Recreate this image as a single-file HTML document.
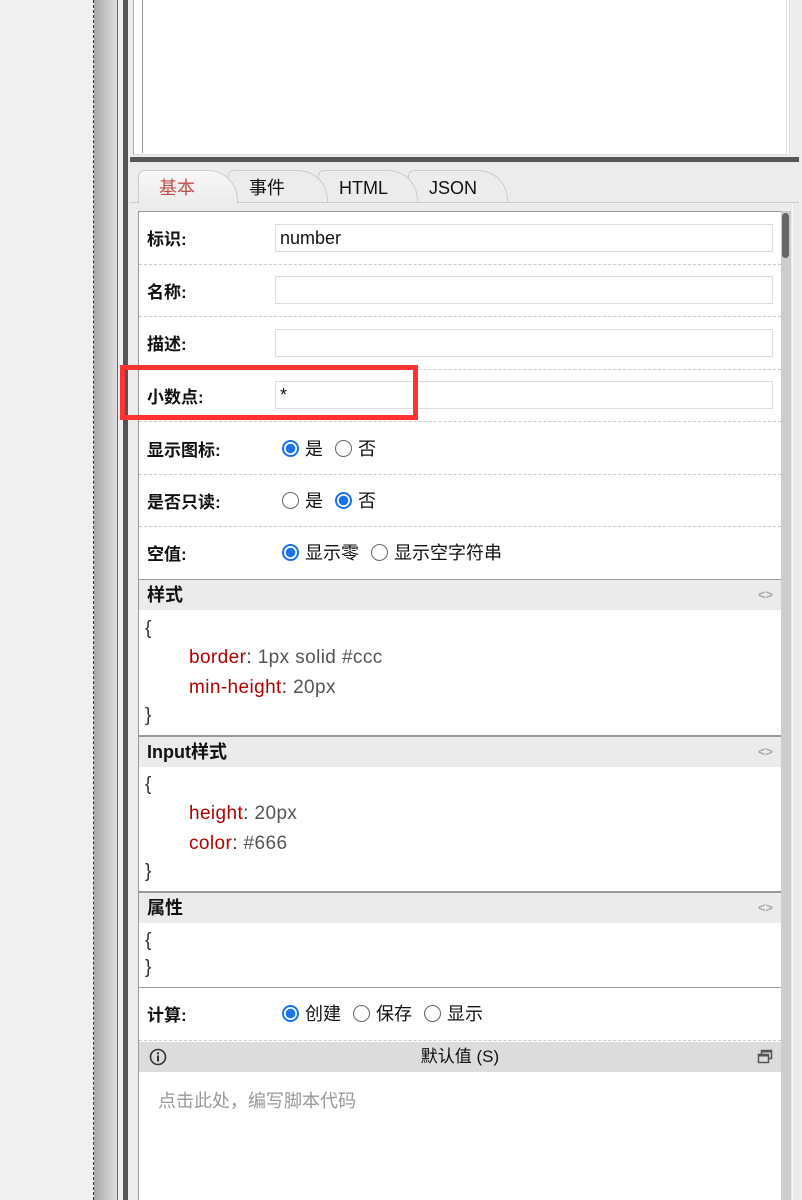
<!DOCTYPE html>
<html><head><meta charset="utf-8"><style>
*{margin:0;padding:0;box-sizing:border-box}
body{width:802px;height:1200px;overflow:hidden;background:#f0f0f0;position:relative;font-family:"Liberation Sans","Noto Sans CJK SC",sans-serif;font-size:17px;color:#111}
.a{position:absolute}
.lbl{position:absolute;left:147px;font-weight:bold;font-size:17px}
.inp{position:absolute;left:275px;width:498px;height:28px;border:1px solid #ddd;background:#fff;font-size:18px;padding:1px 4px;line-height:24px}
.dash{position:absolute;left:139px;width:642px;border-top:1px dashed #ccc}
.rad{display:inline-block;width:17px;height:17px;border-radius:50%;border:1.5px solid #666;vertical-align:-2px;margin-right:6px;background:#fff}
.on{border:2px solid #1a73e8;background:radial-gradient(circle,#1a73e8 0 4.5px,#fff 5px)}
.opt{position:absolute;left:282px;font-size:18px;white-space:nowrap}
.opt span{margin-right:12px}
.hdr{position:absolute;left:139px;width:642px;height:30px;background:#ebebeb;font-weight:bold;padding-left:8px;line-height:30px;font-size:18px}
.code{position:absolute;left:145px;font-size:19px;color:#333;letter-spacing:0.4px}
.k{color:#b30000}.v{color:#555}
.ic{position:absolute;right:8px;top:0;color:#aaa;font-size:13px;font-weight:bold}
.tab{position:absolute;top:170px;height:32px;border:1px solid #ccc;border-bottom:none;border-radius:6px 30px 0 0;background:#ececec;padding-left:20px;line-height:34px;font-size:18px}
</style></head><body>
<div class="a" style="left:93px;top:0;width:0;height:1200px;border-left:1px dashed #333"></div>
<div class="a" style="left:94px;top:0;width:23px;height:1200px;background:linear-gradient(90deg,#a8a8a8,#dedede)"></div>
<div class="a" style="left:117px;top:0;width:1px;height:1200px;background:#666"></div>
<div class="a" style="left:123px;top:0;width:5px;height:1200px;background:#555"></div>
<div class="a" style="left:128px;top:0;width:674px;height:1200px;background:#ececec"></div>
<div class="a" style="left:133px;top:0;width:657px;height:155px;background:#fff;border-left:1px solid #aaa;border-right:1px solid #ddd;border-bottom:1px solid #ddd"></div>
<div class="a" style="left:142px;top:0;width:1px;height:153px;background:#999"></div>
<div class="a" style="left:786px;top:0;width:1px;height:153px;background:#ddd"></div>
<div class="a" style="left:130px;top:157px;width:669px;height:5px;background:#555"></div>
<div class="a" style="left:130px;top:202px;width:669px;height:1px;background:#ccc"></div>
<div class="tab" style="left:408px;width:100px">JSON</div>
<div class="tab" style="left:318px;width:100px">HTML</div>
<div class="tab" style="left:228px;width:100px">事件</div>
<div class="tab" style="left:138px;width:100px;color:#c0504d;background:linear-gradient(#f7f7f7,#ececec);height:33px">基本</div>
<div class="a" style="left:138px;top:211px;width:644px;height:989px;background:#fff;border:1px solid #999;border-bottom:none"></div>
<div class="a" style="left:781px;top:211px;width:10px;height:989px;background:#cdcdcd"></div>
<div class="a" style="left:782px;top:213px;width:7px;height:45px;background:#666;border-radius:4px"></div>
<div class="a" style="left:792px;top:203px;width:1px;height:997px;background:#f8f8f8"></div>

<div class="lbl" style="top:225px">标识:</div><div class="inp" style="top:224px">number</div>
<div class="dash" style="top:264px"></div>
<div class="lbl" style="top:278px">名称:</div><div class="inp" style="top:276px"></div>
<div class="dash" style="top:316px"></div>
<div class="lbl" style="top:330px">描述:</div><div class="inp" style="top:329px"></div>
<div class="dash" style="top:369px"></div>
<div class="lbl" style="top:383px">小数点:</div><div class="inp" style="top:381px">*</div>
<div class="dash" style="top:421px"></div>
<div class="lbl" style="top:436px">显示图标:</div>
<div class="opt" style="top:435px"><i class="rad on"></i><span>是</span><i class="rad"></i>否</div>
<div class="dash" style="top:474px"></div>
<div class="lbl" style="top:488px">是否只读:</div>
<div class="opt" style="top:487px"><i class="rad"></i><span>是</span><i class="rad on"></i>否</div>
<div class="dash" style="top:526px"></div>
<div class="lbl" style="top:540px">空值:</div>
<div class="opt" style="top:539px"><i class="rad on"></i><span>显示零</span><i class="rad"></i>显示空字符串</div>
<div class="a" style="left:139px;top:579px;width:642px;height:1px;background:#999"></div>

<div class="hdr" style="top:580px">样式<span class="ic">&lt;&gt;</span></div>
<div class="code" style="top:618px">{</div>
<div class="code" style="top:647px;left:189px"><span class="k">border</span>: <span class="v">1px solid #ccc</span></div>
<div class="code" style="top:677px;left:189px"><span class="k">min-height</span>: <span class="v">20px</span></div>
<div class="code" style="top:705px">}</div>
<div class="a" style="left:139px;top:735px;width:642px;height:2px;background:#999"></div>
<div class="hdr" style="top:737px">Input样式<span class="ic">&lt;&gt;</span></div>
<div class="code" style="top:774px">{</div>
<div class="code" style="top:803px;left:189px"><span class="k">height</span>: <span class="v">20px</span></div>
<div class="code" style="top:833px;left:189px"><span class="k">color</span>: <span class="v">#666</span></div>
<div class="code" style="top:861px">}</div>
<div class="a" style="left:139px;top:891px;width:642px;height:2px;background:#999"></div>
<div class="hdr" style="top:893px">属性<span class="ic">&lt;&gt;</span></div>
<div class="code" style="top:930px">{</div>
<div class="code" style="top:957px">}</div>
<div class="a" style="left:139px;top:987px;width:642px;height:1px;background:#999"></div>
<div class="lbl" style="top:1001px">计算:</div>
<div class="opt" style="top:1000px"><i class="rad on"></i><span>创建</span><i class="rad"></i><span>保存</span><i class="rad"></i>显示</div>
<div class="dash" style="top:1040px"></div>
<div class="a" style="left:139px;top:1042px;width:642px;height:30px;background:#dcdcdc;text-align:center;line-height:30px;font-size:17px">默认值 (S)
<svg class="a" style="left:10px;top:6px" width="18" height="18" viewBox="0 0 18 18"><circle cx="9" cy="9" r="7.5" fill="none" stroke="#333" stroke-width="1.6"/><rect x="8" y="7.5" width="2" height="6" fill="#333"/><rect x="8" y="4.3" width="2" height="2" fill="#333"/></svg>
<svg class="a" style="right:8px;top:7px" width="16" height="16" viewBox="0 0 16 16"><rect x="4.5" y="1.5" width="10" height="8" fill="none" stroke="#555" stroke-width="1.5"/><rect x="1.5" y="5.5" width="10" height="8" fill="#dcdcdc" stroke="#555" stroke-width="1.5"/><rect x="1.5" y="5.5" width="10" height="2" fill="#555"/><rect x="4.5" y="1.5" width="10" height="2" fill="#555"/></svg></div>
<div class="a" style="left:158px;top:1087px;font-size:18px;color:#999">点击此处，编写脚本代码</div>

<div class="a" style="left:120px;top:365px;width:298px;height:55px;border:5px solid #f33"></div>
</body></html>
